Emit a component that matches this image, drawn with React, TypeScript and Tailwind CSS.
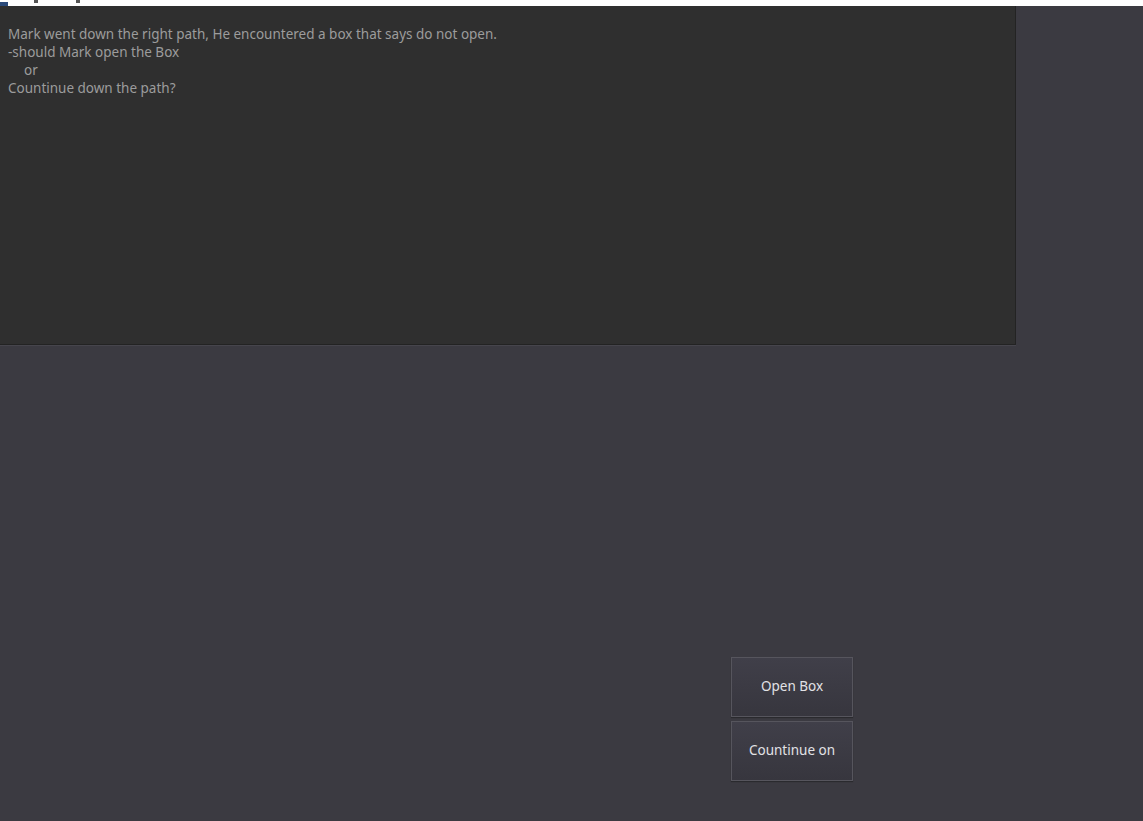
import React from "react";

const storyLines = [
  { text: "Mark went down the right path, He encountered a box that says do not open.", indent: false },
  { text: "-should Mark open the Box", indent: false },
  { text: "or", indent: true },
  { text: "Countinue down the path?", indent: false },
];

const choices = ["Open Box", "Countinue on"];

function TopStrip() {
  return (
    <div className="relative h-[6px] w-full overflow-hidden bg-white">
      <div className="absolute left-0 top-[2px] h-[4px] w-[8px] bg-[#2b4a7a]" />
      <div className="absolute left-[34px] top-0 h-[3px] w-[4px] bg-[#555]" />
      <div className="absolute left-[76px] top-0 h-[3px] w-[4px] bg-[#555]" />
    </div>
  );
}

export default function App() {
  return (
    <div
      className="flex h-[821px] w-[1143px] flex-col overflow-hidden bg-[#3b3a41]"
      style={{ fontFamily: '"Noto Sans", "Open Sans", sans-serif' }}
    >
      <TopStrip />
      <div className="h-[339px] w-[1016px] border-b border-r border-[#232323] bg-[#2f2f2f] px-2 pt-[19px] shadow-[0_1px_0_#46454c]">
        {storyLines.map((line, i) => (
          <div
            key={i}
            className={`whitespace-pre text-[13.5px] leading-[18px] text-[#9c9c9c] ${line.indent ? "pl-[16px]" : ""}`}
          >
            {line.text}
          </div>
        ))}
      </div>
      <div className="flex flex-1 justify-end pr-[290px] pt-[312px]">
        <div className="flex flex-col gap-[4px]">
          {choices.map((c) => (
            <button
              key={c}
              className="flex h-[60px] w-[122px] items-center justify-center border border-[#56555d] bg-gradient-to-b from-[#403f49] to-[#37363e] pb-[1px] text-[13.5px] text-[#e2e2e6] shadow-[0_1px_1px_#2a2a2e]"
            >
              {c}
            </button>
          ))}
        </div>
      </div>
    </div>
  );
}
